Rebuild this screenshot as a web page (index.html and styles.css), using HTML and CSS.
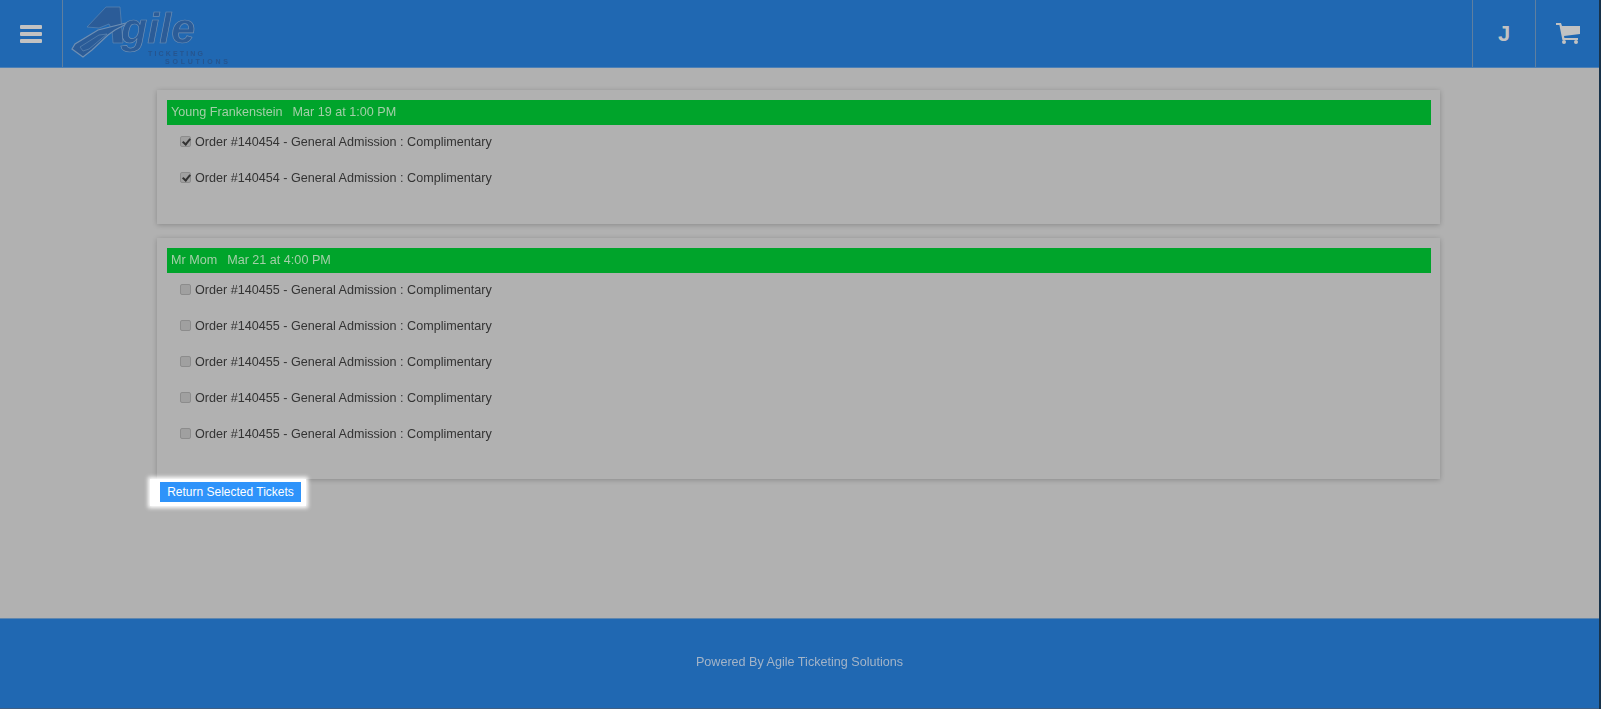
FILE: index.html
```html
<!DOCTYPE html>
<html lang="en">
<head>
    <meta charset="UTF-8">
    <title>Return Tickets</title>
    <link rel="stylesheet" href="styles.css">
</head>
<body>
    <header class="topbar">
        <div class="menu-cell">
            <svg class="menu-icon" width="23" height="20" viewBox="0 0 23 20">
                <rect x="0" y="1" width="22" height="4" rx="1"/>
                <rect x="0" y="8" width="22" height="4" rx="1"/>
                <rect x="0" y="15" width="22" height="4" rx="1"/>
            </svg>
        </div>
        <div class="logo">
            <svg width="170" height="68" viewBox="0 0 170 68">
                <path class="logo-a" d="M24 27 L43 7 L57 7 L60 43 L50 43 L49 30 L46 24 L36 28 Z"/>
                <path class="logo-ticket" d="M9 49 L12 44 L35 30 L67 22 L52 30 L45 35 L29 50 L20 57 Z"/>
                <path class="logo-ticket-in" d="M17 47 L36 35 L44 34 L26 49 L20 51 Z"/>
                <text class="logo-word" x="58" y="43">gile</text>
                <text class="logo-small" x="85" y="56" textLength="55">TICKETING</text>
                <text class="logo-small" x="102" y="64" textLength="63">SOLUTIONS</text>
            </svg>
        </div>
        <div class="spacer"></div>
        <div class="user-cell">J</div>
        <div class="cart-cell">
            <svg class="cart-icon" width="24" height="21" viewBox="0 0 24 21">
                <path d="M0 0 H5 L6 3 H24 V11 L8 13 L8.4 15 H22 V17 H6.4 L3.4 2 H0 Z"/>
                <circle cx="8" cy="19" r="2"/>
                <circle cx="20" cy="19" r="2"/>
            </svg>
        </div>
    </header>

    <main class="content">
        <section class="card card-short">
            <h2 class="card-title"><span>Young Frankenstein</span><span>Mar 19 at 1:00 PM</span></h2>
            <label class="ticket"><input type="checkbox" checked> Order #140454 - General Admission : Complimentary</label>
            <label class="ticket"><input type="checkbox" checked> Order #140454 - General Admission : Complimentary</label>
        </section>

        <section class="card card-tall">
            <h2 class="card-title"><span>Mr Mom</span><span>Mar 21 at 4:00 PM</span></h2>
            <label class="ticket"><input type="checkbox"> Order #140455 - General Admission : Complimentary</label>
            <label class="ticket"><input type="checkbox"> Order #140455 - General Admission : Complimentary</label>
            <label class="ticket"><input type="checkbox"> Order #140455 - General Admission : Complimentary</label>
            <label class="ticket"><input type="checkbox"> Order #140455 - General Admission : Complimentary</label>
            <label class="ticket"><input type="checkbox"> Order #140455 - General Admission : Complimentary</label>
        </section>

        <div class="return-wrap">
            <button class="return-btn">Return Selected Tickets</button>
        </div>
    </main>

    <footer class="footer"><span class="footer-text">Powered By Agile Ticketing Solutions</span></footer>
</body>
</html>
```
FILE: styles.css
```css
* {
    margin: 0;
    padding: 0;
    box-sizing: border-box;
}

html, body {
    height: 709px;
    overflow: hidden;
}

body {
    display: flex;
    flex-direction: column;
    font-family: 'Liberation Sans', Arial, sans-serif;
    background: #b1b1b1;
    color: #333;
    border-right: 2px solid #17324a;
}

.topbar {
    display: flex;
    height: 68px;
    background: #2068b2;
    border-bottom: 1px solid #4c80b6;
    filter: blur(0.5px);
}

.menu-cell {
    width: 63px;
    display: flex;
    justify-content: center;
    align-items: center;
    border-right: 1px solid #5f7f9f;
}

.menu-icon {
    fill: #c2c2c2;
}

.logo {
    width: 170px;
}

.logo svg {
    display: block;
    filter: blur(0.5px);
}

.logo-ticket {
    fill: #2b5c98;
    stroke: #6f8fb3;
    stroke-width: 1.2;
}

.logo-ticket-in {
    fill: #2b5c98;
    stroke: #5f86b2;
    stroke-width: 0.7;
}

.logo-a {
    fill: #2b5c98;
    stroke: #5f86b2;
    stroke-width: 0.7;
}

.logo-word {
    font-family: 'Liberation Sans', Arial, sans-serif;
    font-style: italic;
    font-weight: bold;
    font-size: 43px;
    fill: #2b5c98;
    stroke: #6f8fb3;
    stroke-width: 0.7;
}

.logo-small {
    font-family: 'Liberation Sans', Arial, sans-serif;
    font-size: 7px;
    font-weight: bold;
    fill: #26558f;
}

.spacer {
    flex: 1;
}

.user-cell, .cart-cell {
    display: flex;
    justify-content: center;
    align-items: center;
    border-left: 1px solid #5f7f9f;
    color: #c2c2c2;
}

.user-cell {
    width: 63px;
    font-size: 22px;
    font-weight: bold;
}

.cart-cell {
    width: 64px;
}

.cart-icon {
    fill: #c2c2c2;
}

.content {
    flex: 1;
    padding: 22px 159px 0 157px;
}

.card {
    padding: 10px 9px 0 10px;
    margin-bottom: 14px;
    background: #b1b1b1;
    box-shadow: 0 1px 5px rgba(0, 0, 0, 0.22);
}

.card-short {
    height: 134px;
}

.card-tall {
    height: 241px;
}

.card-title {
    display: flex;
    gap: 10px;
    height: 25px;
    line-height: 25px;
    padding-left: 4px;
    background: #00a42b;
    color: #a3cfa8;
    font-size: 12.6px;
    font-weight: normal;
    filter: blur(0.4px);
}

.ticket {
    display: flex;
    align-items: center;
    gap: 4px;
    height: 36px;
    padding: 0 0 2px 13px;
    font-size: 12.6px;
    color: #333;
    filter: blur(0.4px);
}

.ticket input {
    appearance: none;
    position: relative;
    width: 11px;
    height: 11px;
    margin-top: -1px;
    background: #a0a0a0;
    border: 1px solid #8c8c8c;
    border-radius: 2px;
}

.ticket input:checked::after {
    content: "";
    position: absolute;
    left: 2.5px;
    top: 0;
    width: 3px;
    height: 6px;
    border: solid #333;
    border-width: 0 2px 2px 0;
    transform: rotate(40deg);
}

.return-wrap {
    width: fit-content;
    margin: -14px 0 0 -7px;
    padding: 3px 5px 4px 10px;
    background: #fff;
    box-shadow: 0 0 4px 2px #fff;
}

.return-btn {
    display: block;
    width: 141px;
    height: 20px;
    border: none;
    background: #2e93fa;
    color: #fff;
    font-family: 'Liberation Sans', Arial, sans-serif;
    font-size: 12px;
}

.footer {
    height: 91px;
    background: #2068b2;
    border-top: 1px solid #5f86ae;
    border-bottom: 1px solid #3d5f85;
    font-size: 12.6px;
    text-align: center;
    line-height: 87px;
}

.footer-text {
    display: inline-block;
    color: #a3b4c8;
    filter: blur(0.4px);
}
```
